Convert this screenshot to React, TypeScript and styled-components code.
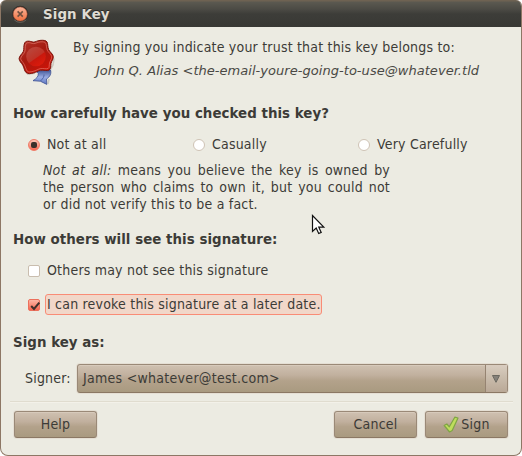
import React from 'react';
import styled, { createGlobalStyle, css } from 'styled-components';

const GlobalStyle = createGlobalStyle`
  html, body { margin: 0; background: #fff; overflow: hidden; }
  *, *::before, *::after { box-sizing: border-box; }
`;

const Dialog = styled.main`
  position: relative;
  display: flex;
  flex-direction: column;
  width: 522px;
  height: 456px;
  overflow: hidden;
  border: 1px solid #8d7765;
  border-top: 0;
  border-radius: 6px 6px 8px 8px;
  background: #ecebe2;
  color: #3c3b37;
  font: 14px/17px "DejaVu Sans Condensed", "DejaVu Sans", sans-serif;
  letter-spacing: 0.2px;
`;

const TitleBar = styled.header`
  display: flex;
  align-items: center;
  gap: 13px;
  flex: none;
  height: 27px;
  padding: 1px 0 0 11px;
  background: linear-gradient(#6e6252 0 1px, #5b5950 2px, #4c4b45 9px, #3d3d39 14px, #383834);
`;

const WindowTitle = styled.h1`
  margin: 0;
  color: #dfdbd2;
  font: bold 13.4px/17px "DejaVu Sans", sans-serif;
  letter-spacing: 0.08px;
  text-shadow: 0 -1px #2d2c29;
`;

const Content = styled.div`
  display: flex;
  flex-direction: column;
  padding: 0 13px 0 12px;
`;

const Intro = styled.section`
  display: flex;
  gap: 16px;
  height: 78px;
  padding: 12px 0 0 4px;
`;

const IntroText = styled.div`
  display: flex;
  flex-direction: column;
  gap: 6px;
  white-space: nowrap;
`;

const KeyOwner = styled.em`
  padding-left: 23px;
  color: #4a4945;
  font: italic 13px/17px "DejaVu Sans", sans-serif;
  letter-spacing: 0.04px;
`;

const Heading = styled.h2<{ $top?: number }>`
  margin: ${({ $top = 0 }) => $top}px 0 0;
  font: bold 13.4px/17px "DejaVu Sans", sans-serif;
  letter-spacing: 0.03px;
`;

const RadioGroup = styled.div`
  display: grid;
  grid-template-columns: repeat(3, 165px);
  margin-top: 14px;
  padding-left: 15px;
`;

const CheckList = styled.div`
  display: flex;
  flex-direction: column;
  gap: 17px;
  margin-top: 14px;
  padding-left: 15px;
`;

const Option = styled.label`
  display: flex;
  align-items: center;
  height: 17px;
  white-space: nowrap;
`;

const OptionText = styled.span<{ $focused?: boolean }>`
  margin-left: 7px;
  ${({ $focused }) =>
    $focused &&
    css`
      height: 21px;
      margin-left: 5px;
      padding: 1px 0 0 1px;
      border: 1px solid #f98c76;
      border-radius: 3px;
      background: #f1d7c9;
    `}
`;

const Radio = styled.span<{ $checked?: boolean }>`
  display: grid;
  flex: none;
  place-items: center;
  width: 12px;
  height: 12px;
  margin-top: 1px;
  border: 1px solid #cfc3b5;
  border-radius: 50%;
  background: #fff;
  ${({ $checked }) =>
    $checked &&
    css`
      border-color: #f07a66;
      background: linear-gradient(#fcc4b4, #fba08d 45%, #f7634d);
      &::after {
        content: '';
        width: 6px;
        height: 6px;
        border-radius: 2px;
        background: #3b302b;
      }
    `}
`;

const CheckBox = styled.span<{ $checked?: boolean }>`
  display: grid;
  flex: none;
  place-items: center;
  width: 12px;
  height: 12px;
  margin-top: 1px;
  border: 1px solid ${({ $checked }) => ($checked ? '#ec705c' : '#c9bdae')};
  border-radius: 2px;
  background: ${({ $checked }) => ($checked ? 'linear-gradient(#fcb5a3, #fa8f7b 50%, #f5654e)' : '#fff')};
`;

const Explanation = styled.div`
  display: flex;
  flex-direction: column;
  width: 347px;
  margin: 9px 0 0 30px;
`;

const ExplanationLine = styled.span<{ $last?: boolean }>`
  text-align-last: ${({ $last }) => ($last ? 'left' : 'justify')};
`;

const SignerRow = styled.div`
  display: flex;
  align-items: center;
  height: 29px;
  margin-top: 13px;
  padding-left: 12px;
`;

const SignerLabel = styled.span`
  width: 52px;
`;

const raised = css`
  border: 1px solid #9a8977;
  border-bottom-color: #8b7864;
  border-radius: 3px;
  background: linear-gradient(#cfc1b1, #c1b09e 38%, #b3a28b 58%, #a99a80);
  box-shadow: inset 0 1px #d7cabb, 0 0 0 1px #e5dfd4;
`;

const Select = styled.div`
  ${raised}
  display: flex;
  align-items: center;
  justify-content: space-between;
  width: 431px;
  height: 29px;
  padding-left: 5px;
  letter-spacing: 0.28px;
`;

const SelectArrow = styled.span`
  display: grid;
  place-items: center;
  width: 22px;
  height: 27px;
  padding-right: 1px;
  border-left: 1px solid #958371;
  background: linear-gradient(#d9cdc0, #cbbeae 40%, #baa997);
`;

const Separator = styled.hr`
  width: 503px;
  height: 2px;
  margin: 8px 0 0 -3px;
  border: 0;
  border-top: 1px solid #e0dccf;
  background: #f3f1e9;
`;

const Actions = styled.footer`
  display: flex;
  gap: 8px;
  margin-top: 8px;
  padding-left: 1px;
`;

const Button = styled.button<{ $first?: boolean }>`
  ${raised}
  display: flex;
  align-items: center;
  justify-content: center;
  gap: 2px;
  width: 83px;
  height: 27px;
  margin-right: ${({ $first }) => ($first ? 'auto' : '0')};
  padding: 0;
  color: inherit;
  font: inherit;
  letter-spacing: inherit;
`;

const Pointer = styled.svg`
  position: absolute;
  left: 310px;
  top: 214px;
`;

const CloseIcon = () => (
  <svg width="18" height="18" viewBox="0 0 18 18">
    <defs>
      <linearGradient id="close" x2="0" y2="1">
        <stop stopColor="#f9b59b" />
        <stop offset="1" stopColor="#f0703f" />
      </linearGradient>
    </defs>
    <circle cx="8.2" cy="9" r="8.2" fill="#2f2e2b" />
    <path d="M2.200 14.800a8.300 8.300 0 0 0 12 0" fill="none" stroke="#67655e" />
    <circle cx="8.200" cy="9" r="7" fill="url(#close)" stroke="#b9583a" strokeWidth=".5" />
    <path d="M5.600 6.400l5.200 5.200M10.800 6.400l-5.200 5.200" stroke="#70503f" strokeWidth="1.600" />
  </svg>
);

const SealIcon = () => (
  <svg width="40" height="48" viewBox="0 0 40 48">
    <defs>
      <linearGradient id="wax" x2=".7" y2="1">
        <stop stopColor="#b3382c" />
        <stop offset=".5" stopColor="#a51a10" />
        <stop offset="1" stopColor="#cf1206" />
      </linearGradient>
      <linearGradient id="disc" x1=".1" x2=".8" y2="1">
        <stop stopColor="#b94a40" />
        <stop offset=".56" stopColor="#bf3226" />
        <stop offset=".6" stopColor="#c9180d" />
        <stop offset="1" stopColor="#de1c0c" />
      </linearGradient>
      <linearGradient id="ribbon" x2="0" y2="1">
        <stop stopColor="#3f5494" />
        <stop offset=".5" stopColor="#9aace2" />
        <stop offset="1" stopColor="#5a74c0" />
      </linearGradient>
    </defs>
    <path d="M37 19.500L36 26l-3.500 6M10 35.200l8-1M32 40l-1 5" fill="none" stroke="#6b675c" strokeOpacity=".25" strokeWidth="1.600" />
    <path d="M19 32l14.500-1c1 3.500-.2 6.500-4 9l.3 5.400-6.500-3.200-7.300-.5c3.500-2 5.500-4.300 5.300-7.200z" fill="url(#ribbon)" stroke="#3d5190" strokeWidth=".8" />
    <path d="M23.500 42c2.700-2.600 3.800-4.500 3.500-6.500" fill="none" stroke="#405597" strokeWidth=".8" />
    <path d="M10.500 2.200c2.500-.4 4 .9 6 .9s3.500-1.400 6.500-1.700 6-.2 7 1.600.5 4.700 1.500 7.300 4.800 4.700 4.800 7.500-1.800 4.200-2.300 6.700.3 5-1.800 6.500-5.700-.4-8.700.3-4 2-7 2.700-5.800 1.200-7.500-.5-1.800-4.700-3.200-7.300-3.800-4-3.700-6.700 3.300-4.700 4.200-7 .2-5.200 1-7.500 1.400-2.500 3.200-2.800z" fill="url(#wax)" stroke="#7d150d" strokeWidth="1" />
    <path d="M10.900 3.700c2-.4 3.700.9 5.700.9s3.700-1.400 6.600-1.700 4.900.1 5.600 1.300.5 4.500 1.500 6.900 4.400 4.300 4.400 6.700-1.600 3.800-2.200 6.300.2 4.300-1.300 5.300-5.300-.4-8.100.3-4 2-7 2.700-4.900.8-5.900-.3-1.700-4.300-3.100-6.900-3.400-3.700-3.400-5.700 3.100-4.300 4-6.600.2-4.900.8-6.800 1-2.200 2.400-2.400z" fill="none" stroke="#ea8579" strokeOpacity=".65" strokeWidth=".9" />
    <circle cx="19" cy="17.500" r="9.800" fill="url(#disc)" />
  </svg>
);

const CheckMark = () => (
  <svg width="12" height="12" viewBox="0 0 12 12">
    <path d="M2.200 6l2.800 3L10.300 2.600" fill="none" stroke="#40302b" strokeWidth="2" />
  </svg>
);

const ApplyIcon = () => (
  <svg width="16" height="18" viewBox="0 0 16 18">
    <path d="M1.200 9.500l2.600-1.500 2.500 2.800L11.800 1.200l3.200.8L9.200 14.500 6.600 16z" fill="#bfdd5c" stroke="#7fa544" strokeWidth="1.200" strokeLinejoin="round" />
  </svg>
);

const ArrowIcon = () => (
  <svg width="8" height="8" viewBox="0 0 8 8">
    <path d="M.5.500h7L4 7.300z" fill="#85817a" stroke="#6b6860" />
  </svg>
);

export default function App() {
  return (
    <>
      <GlobalStyle />
      <Dialog>
        <TitleBar>
          <CloseIcon />
          <WindowTitle>Sign Key</WindowTitle>
        </TitleBar>
        <Content>
          <Intro>
            <SealIcon />
            <IntroText>
              <span>By signing you indicate your trust that this key belongs to:</span>
              <KeyOwner>John Q. Alias &lt;the-email-youre-going-to-use@whatever.tld</KeyOwner>
            </IntroText>
          </Intro>
          <Heading>How carefully have you checked this key?</Heading>
          <RadioGroup>
            <Option><Radio $checked /><OptionText>Not at all</OptionText></Option>
            <Option><Radio /><OptionText>Casually</OptionText></Option>
            <Option><Radio /><OptionText>Very Carefully</OptionText></Option>
          </RadioGroup>
          <Explanation>
            <ExplanationLine><em>Not at all:</em> means you believe the key is owned by</ExplanationLine>
            <ExplanationLine>the person who claims to own it, but you could not</ExplanationLine>
            <ExplanationLine $last>or did not verify this to be a fact.</ExplanationLine>
          </Explanation>
          <Heading $top={18}>How others will see this signature:</Heading>
          <CheckList>
            <Option><CheckBox /><OptionText>Others may not see this signature</OptionText></Option>
            <Option>
              <CheckBox $checked><CheckMark /></CheckBox>
              <OptionText $focused>I can revoke this signature at a later date.</OptionText>
            </Option>
          </CheckList>
          <Heading $top={21}>Sign key as:</Heading>
          <SignerRow>
            <SignerLabel>Signer:</SignerLabel>
            <Select>
              <span>James &lt;whatever@test.com&gt;</span>
              <SelectArrow><ArrowIcon /></SelectArrow>
            </Select>
          </SignerRow>
          <Separator />
          <Actions>
            <Button $first>Help</Button>
            <Button>Cancel</Button>
            <Button><ApplyIcon />Sign</Button>
          </Actions>
        </Content>
        <Pointer width="16" height="22" viewBox="0 0 16 22">
          <path d="M1.500 1.500v16l3.700-3.400 2.500 5.400 2.500-1.100-2.400-5.200h5z" fill="#fff" stroke="#111" strokeWidth="1.200" />
        </Pointer>
      </Dialog>
    </>
  );
}
